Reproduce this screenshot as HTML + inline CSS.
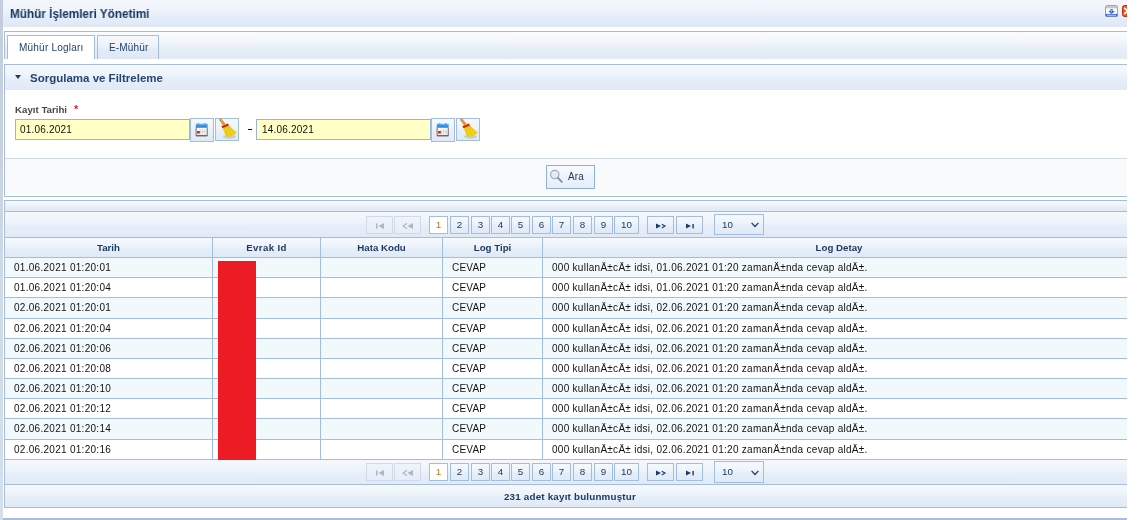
<!DOCTYPE html>
<html><head><meta charset="utf-8"><style>
*{box-sizing:border-box;margin:0;padding:0}
html,body{width:1137px;height:520px;overflow:hidden;background:#fff;font-family:"Liberation Sans",sans-serif}
.a{position:absolute}
.t{position:absolute;white-space:nowrap;line-height:1;will-change:transform}
#wrap{left:0;top:0;width:1127px;height:520px;overflow:hidden}
.g{background:linear-gradient(#f5f9fd,#eef4fb 40%,#e5edf8 60%,#e0eaf7)}
.pb{position:absolute;height:18px;border:1px solid #a2bde0;background:linear-gradient(#f5f9fd,#eef4fb 40%,#e5edf8 60%,#e0eaf7);}
.dis{border-color:#cfdbeb;background:linear-gradient(#f0f4fa,#e6edf7)}
.cur{background:#fff}
.hl{position:absolute;height:1px;background:#a2bde0}
.vl{position:absolute;width:1px;background:#a2bde0}
</style></head><body>
<div id="wrap" class="a">
<div class="a g" style="left:0;top:0;width:1127px;height:27px;background:linear-gradient(#f3f7fc,#eff4fb 40%,#e5edf8 60%,#dfe9f6)"></div>
<div class="t" style="left:10px;top:7.6px;font-weight:bold;font-size:12.3px;color:#1a3862;transform:scaleX(0.955);transform-origin:0 0">Mühür İşlemleri Yönetimi</div>
<svg class="a" style="left:1105px;top:5px" width="13" height="12" viewBox="0 0 13 12">
<rect x="0.5" y="0.5" width="12" height="11" rx="1.2" fill="#fbfbfb" stroke="#a4a4a4"/>
<rect x="1" y="1" width="11" height="2.3" fill="#c6c6c6"/>
<path d="M5.4 4h2.2v2h2.2l-3.3 2.9-3.3-2.9h2.2z" fill="#2f5fd4"/>
<path d="M6.5 4.6 V7.4" stroke="#c8d8fa" stroke-width="0.7"/>
<rect x="0.6" y="8.9" width="11.8" height="2.6" fill="#3c66da"/>
<rect x="2" y="9.8" width="9" height="0.8" fill="#e4ecff"/>
</svg>
<svg class="a" style="left:1122px;top:5px" width="5" height="12" viewBox="0 0 5 12">
<rect x="0.5" y="0.5" width="12" height="11" rx="2" fill="#e9561c" stroke="#cc2a10"/>
<path d="M2.2 2.8 L5.5 6 L2.2 9.2" stroke="#fff" stroke-width="1.7" fill="none"/>
</svg>
<div class="a" style="left:4px;top:31px;width:1130px;height:28px;border:1px solid #a2bde0;border-bottom:none;background:linear-gradient(#fafcfe,#f1f5fb 40%,#e6eef8 60%,#e1ebf7)"></div>
<div class="a" style="left:7px;top:35px;width:88px;height:24px;border:1px solid #a2bde0;border-bottom:none;background:#fff"></div>
<div class="t" style="left:18.5px;top:43px;font-size:10px;letter-spacing:0.22px;color:#22446e">Mühür Logları</div>
<div class="a" style="left:97px;top:35px;width:62px;height:24px;border:1px solid #a2bde0;border-bottom:none;background:linear-gradient(#f5f8fc,#eef3fa 40%,#e3ebf6 60%,#dfe8f4)"></div>
<div class="t" style="left:108.6px;top:43px;font-size:10px;letter-spacing:0.15px;color:#22446e">E-Mühür</div>
<div class="a" style="left:4px;top:64px;width:1130px;height:133px;border:1px solid #a2bde0;background:#fff"></div>
<div class="a" style="left:5px;top:65px;width:1125px;height:25px;background:linear-gradient(#f5f9fd,#eef4fb 40%,#e5edf8 60%,#e0eaf7)"></div>
<div class="a" style="left:15px;top:75px;width:0;height:0;border-left:3.5px solid transparent;border-right:3.5px solid transparent;border-top:4.5px solid #1d3b63"></div>
<div class="t" style="left:30px;top:73px;font-weight:bold;font-size:11.5px;color:#27466f">Sorgulama ve Filtreleme</div>
<div class="t" style="left:15px;top:105px;font-weight:bold;font-size:9.7px;color:#484848">Kayıt Tarihi</div>
<div class="t" style="left:74px;top:104px;font-weight:bold;font-size:11px;color:#f01a22">*</div>
<div class="a" style="left:15px;top:119px;width:175px;height:21px;border:1px solid #98b5de;background:#ffffc6"></div>
<div class="a" style="left:190px;top:118px;width:24px;height:24px;border:1px solid #a2bde0;background:linear-gradient(#f5f9fd,#eef4fb 40%,#e5edf8 60%,#e0eaf7)"></div>
<div class="a" style="left:215px;top:118px;width:24px;height:23px;border:1px solid #a2bde0;background:linear-gradient(#f5f9fd,#eef4fb 40%,#e5edf8 60%,#e0eaf7)"></div>
<svg class="a" style="left:195px;top:122px" width="13" height="15" viewBox="0 0 14 15" preserveAspectRatio="none">
<rect x="1.2" y="2.2" width="12" height="11.6" fill="#f7f9fa"/>
<path d="M1.2 5.5 V13.8 H13.2 V5.5" fill="none" stroke="#6a5650" stroke-width="0.9"/>
<rect x="1.2" y="13.2" width="12" height="1" fill="#6a5650"/>
<rect x="0.9" y="1.9" width="12.6" height="3.9" fill="#2a8eea"/>
<rect x="0.9" y="1.9" width="12.6" height="1.3" fill="#62b4f6"/>
<rect x="3" y="0.9" width="1.5" height="2.6" rx="0.6" fill="#8793a0"/>
<rect x="9.6" y="0.9" width="1.5" height="2.6" rx="0.6" fill="#8793a0"/>
<path d="M5.6 7v5.8M8.2 7v5.8M10.8 7v5.8M2 9.8h10.6" stroke="#c9cdd1" stroke-width="0.8"/>
<rect x="2.2" y="9" width="3" height="2.6" fill="#e4222a"/>
</svg>
<svg class="a" style="left:218px;top:118px" width="20" height="21" viewBox="0 0 20 21">
<ellipse cx="11.5" cy="18.6" rx="6.5" ry="1.9" fill="#a9b2be" opacity="0.55"/>
<path d="M2.6 1.8 L6.8 7.4" stroke="#d08a2a" stroke-width="2.6" stroke-linecap="round"/>
<path d="M2.8 1.6 L5.2 4.8" stroke="#e8b060" stroke-width="0.9" stroke-linecap="round"/>
<path d="M4.2 9.2 L10.4 6.8 C13 9.5 16.5 12.5 19 14.6 C16.5 17.5 12 19.2 8.2 19.3 C6.8 16 5.5 12.5 4.2 9.2 Z" fill="#f2d41e"/>
<path d="M6.5 10 L9.8 18.6 M8.6 9 L13.4 17.8 M10.4 8 L16.5 15.8" stroke="#cfae0e" stroke-width="0.55"/>
<path d="M3.4 7.9 L9.9 5.4 L11 7.6 L4.5 10.2 Z" fill="#d61e1e"/>
<path d="M3.3 7.8 L9.8 5.3" stroke="#f2d41e" stroke-width="0.7"/>
</svg>
<div class="a" style="left:256px;top:119px;width:175px;height:21px;border:1px solid #98b5de;background:#ffffc6"></div>
<div class="a" style="left:431px;top:118px;width:24px;height:24px;border:1px solid #a2bde0;background:linear-gradient(#f5f9fd,#eef4fb 40%,#e5edf8 60%,#e0eaf7)"></div>
<div class="a" style="left:456px;top:118px;width:24px;height:23px;border:1px solid #a2bde0;background:linear-gradient(#f5f9fd,#eef4fb 40%,#e5edf8 60%,#e0eaf7)"></div>
<svg class="a" style="left:436px;top:122px" width="13" height="15" viewBox="0 0 14 15" preserveAspectRatio="none">
<rect x="1.2" y="2.2" width="12" height="11.6" fill="#f7f9fa"/>
<path d="M1.2 5.5 V13.8 H13.2 V5.5" fill="none" stroke="#6a5650" stroke-width="0.9"/>
<rect x="1.2" y="13.2" width="12" height="1" fill="#6a5650"/>
<rect x="0.9" y="1.9" width="12.6" height="3.9" fill="#2a8eea"/>
<rect x="0.9" y="1.9" width="12.6" height="1.3" fill="#62b4f6"/>
<rect x="3" y="0.9" width="1.5" height="2.6" rx="0.6" fill="#8793a0"/>
<rect x="9.6" y="0.9" width="1.5" height="2.6" rx="0.6" fill="#8793a0"/>
<path d="M5.6 7v5.8M8.2 7v5.8M10.8 7v5.8M2 9.8h10.6" stroke="#c9cdd1" stroke-width="0.8"/>
<rect x="2.2" y="9" width="3" height="2.6" fill="#e4222a"/>
</svg>
<svg class="a" style="left:459px;top:118px" width="20" height="21" viewBox="0 0 20 21">
<ellipse cx="11.5" cy="18.6" rx="6.5" ry="1.9" fill="#a9b2be" opacity="0.55"/>
<path d="M2.6 1.8 L6.8 7.4" stroke="#d08a2a" stroke-width="2.6" stroke-linecap="round"/>
<path d="M2.8 1.6 L5.2 4.8" stroke="#e8b060" stroke-width="0.9" stroke-linecap="round"/>
<path d="M4.2 9.2 L10.4 6.8 C13 9.5 16.5 12.5 19 14.6 C16.5 17.5 12 19.2 8.2 19.3 C6.8 16 5.5 12.5 4.2 9.2 Z" fill="#f2d41e"/>
<path d="M6.5 10 L9.8 18.6 M8.6 9 L13.4 17.8 M10.4 8 L16.5 15.8" stroke="#cfae0e" stroke-width="0.55"/>
<path d="M3.4 7.9 L9.9 5.4 L11 7.6 L4.5 10.2 Z" fill="#d61e1e"/>
<path d="M3.3 7.8 L9.8 5.3" stroke="#f2d41e" stroke-width="0.7"/>
</svg>
<div class="t" style="left:20px;top:125.4px;font-size:10px;letter-spacing:0.2px;color:#111">01.06.2021</div>
<div class="t" style="left:262px;top:125.4px;font-size:10px;letter-spacing:0.2px;color:#111">14.06.2021</div>
<div class="a" style="left:248px;top:129px;width:4px;height:1px;background:#111"></div>
<div class="a" style="left:5px;top:158px;width:1125px;height:1px;background:#cfdbe7"></div>
<div class="a" style="left:5px;top:159px;width:1125px;height:36px;background:#f8fafc"></div>
<div class="a" style="left:546px;top:165px;width:49px;height:24px;border:1px solid #90b0dc;background:linear-gradient(#f8fafd,#e5edf8)"></div>
<svg class="a" style="left:549px;top:169px" width="15" height="15" viewBox="0 0 15 15">
<circle cx="5.8" cy="5.6" r="4.2" fill="#dcecf9" stroke="#a2a7ac" stroke-width="1.1"/>
<path d="M3.3 4.6 C4 3.3 6 2.8 7.6 3.6" stroke="#f4f9fe" stroke-width="0.9" fill="none"/>
<path d="M8.9 8.8 L12.8 12.9" stroke="#8c9096" stroke-width="1.9" stroke-linecap="round"/>
</svg>
<div class="t" style="left:568px;top:172px;font-size:10px;letter-spacing:0.1px;color:#1d3b63">Ara</div>
<div class="a" style="left:4px;top:200px;width:1130px;height:308px;border:1px solid #a2bde0;background:#fff"></div>
<div class="a g" style="left:5px;top:201px;width:1125px;height:10px"></div>
<div class="hl" style="left:5px;top:211px;width:1125px"></div>
<div class="a" style="left:5px;top:212px;width:1125px;height:25px;background:linear-gradient(#f5f9fd,#eef4fb 40%,#e5edf8 60%,#e0eaf7)"></div>
<div class="pb dis" style="left:366px;top:216px;width:27px"></div>
<div class="pb dis" style="left:394px;top:216px;width:27px"></div>
<svg class="a" style="left:375px;top:223px" width="10" height="6" viewBox="0 0 10 6"><rect x="1" y="0.5" width="1.5" height="5" fill="#a9b6c6"/><path d="M9 0 V6 L3.5 3 Z" fill="#a9b6c6"/></svg>
<svg class="a" style="left:402px;top:223px" width="12" height="6" viewBox="0 0 12 6"><path d="M5 0.3 L1.2 3 L5 5.7" stroke="#a9b6c6" stroke-width="1.2" fill="none"/><path d="M11 0 V6 L5.5 3 Z" fill="#a9b6c6"/></svg>
<div class="pb cur" style="left:429px;top:216px;width:19px"></div>
<div class="t" style="left:429px;top:220.3px;width:19px;text-align:center;font-size:9.8px;color:#e07010">1</div>
<div class="pb" style="left:450px;top:216px;width:19px"></div>
<div class="t" style="left:450px;top:220.3px;width:19px;text-align:center;font-size:9.8px;color:#1d3b63">2</div>
<div class="pb" style="left:471px;top:216px;width:19px"></div>
<div class="t" style="left:471px;top:220.3px;width:19px;text-align:center;font-size:9.8px;color:#1d3b63">3</div>
<div class="pb" style="left:491px;top:216px;width:19px"></div>
<div class="t" style="left:491px;top:220.3px;width:19px;text-align:center;font-size:9.8px;color:#1d3b63">4</div>
<div class="pb" style="left:511px;top:216px;width:19px"></div>
<div class="t" style="left:511px;top:220.3px;width:19px;text-align:center;font-size:9.8px;color:#1d3b63">5</div>
<div class="pb" style="left:532px;top:216px;width:19px"></div>
<div class="t" style="left:532px;top:220.3px;width:19px;text-align:center;font-size:9.8px;color:#1d3b63">6</div>
<div class="pb" style="left:552px;top:216px;width:19px"></div>
<div class="t" style="left:552px;top:220.3px;width:19px;text-align:center;font-size:9.8px;color:#1d3b63">7</div>
<div class="pb" style="left:573px;top:216px;width:19px"></div>
<div class="t" style="left:573px;top:220.3px;width:19px;text-align:center;font-size:9.8px;color:#1d3b63">8</div>
<div class="pb" style="left:594px;top:216px;width:19px"></div>
<div class="t" style="left:594px;top:220.3px;width:19px;text-align:center;font-size:9.8px;color:#1d3b63">9</div>
<div class="pb" style="left:614px;top:216px;width:25px"></div>
<div class="t" style="left:614px;top:220.3px;width:25px;text-align:center;font-size:9.8px;color:#1d3b63">10</div>
<div class="pb" style="left:647px;top:216px;width:27px"></div>
<div class="pb" style="left:676px;top:216px;width:27px"></div>
<svg class="a" style="left:655px;top:223px" width="12" height="6" viewBox="0 0 12 6"><path d="M1 0.6 V5.6 L6 3.1 Z" fill="#1d3b63"/><path d="M6.8 1.3 L10 3.1 L6.8 4.9" stroke="#1d3b63" stroke-width="1.1" fill="none"/></svg>
<svg class="a" style="left:685px;top:223px" width="10" height="6" viewBox="0 0 10 6"><path d="M1 0.6 V5.6 L6 3.1 Z" fill="#1d3b63"/><rect x="7.4" y="1" width="1.4" height="4.4" fill="#1d3b63"/></svg>
<div class="a" style="left:714px;top:214px;width:50px;height:21px;border:1px solid #a2bde0;background:linear-gradient(#f5f9fd,#eef4fb 40%,#e5edf8 60%,#e0eaf7)"></div>
<div class="t" style="left:722px;top:219.6px;font-size:9.8px;color:#1d3b63">10</div>
<svg class="a" style="left:751px;top:222.0px" width="9" height="6" viewBox="0 0 9 6"><path d="M0.6 0.8 L4 4.5 L7.4 0.8" stroke="#1d3b63" stroke-width="1.2" fill="none"/></svg>
<div class="hl" style="left:5px;top:237px;width:1125px"></div>
<div class="a" style="left:5px;top:238px;width:1125px;height:19px;background:linear-gradient(#f5f9fd,#eef4fb 40%,#e5edf8 60%,#e0eaf7)"></div>
<div class="hl" style="left:5px;top:257px;width:1125px"></div>
<div class="t" style="left:5px;top:243px;width:207px;text-align:center;font-weight:bold;font-size:9.7px;letter-spacing:0;color:#1d3b63">Tarih</div>
<div class="vl" style="left:212px;top:238px;height:222px"></div>
<div class="t" style="left:213px;top:243px;width:107px;text-align:center;font-weight:bold;font-size:9.7px;letter-spacing:0.35px;color:#1d3b63">Evrak Id</div>
<div class="vl" style="left:320px;top:238px;height:222px"></div>
<div class="t" style="left:321px;top:243px;width:121px;text-align:center;font-weight:bold;font-size:9.7px;letter-spacing:0;color:#1d3b63">Hata Kodu</div>
<div class="vl" style="left:442px;top:238px;height:222px"></div>
<div class="t" style="left:443px;top:243px;width:99px;text-align:center;font-weight:bold;font-size:9.7px;letter-spacing:0;color:#1d3b63">Log Tipi</div>
<div class="vl" style="left:542px;top:238px;height:222px"></div>
<div class="t" style="left:543px;top:243px;width:592px;text-align:center;font-weight:bold;font-size:9.7px;letter-spacing:0;color:#1d3b63">Log Detay</div>
<div class="a" style="left:5px;top:258px;width:1125px;height:19px;background:#f2f9fd"></div>
<div class="hl" style="left:5px;top:277px;width:1125px"></div>
<div class="t" style="left:14px;top:263px;font-size:10px;letter-spacing:0.28px;color:#111">01.06.2021 01:20:01</div>
<div class="t" style="left:452px;top:263px;font-size:10px;letter-spacing:0.2px;color:#111">CEVAP</div>
<div class="t" style="left:552px;top:263px;font-size:10px;letter-spacing:0.28px;color:#111">000 kullanÄ±cÄ± idsi, 01.06.2021 01:20 zamanÄ±nda cevap aldÄ±.</div>
<div class="hl" style="left:5px;top:297px;width:1125px"></div>
<div class="t" style="left:14px;top:283px;font-size:10px;letter-spacing:0.28px;color:#111">01.06.2021 01:20:04</div>
<div class="t" style="left:452px;top:283px;font-size:10px;letter-spacing:0.2px;color:#111">CEVAP</div>
<div class="t" style="left:552px;top:283px;font-size:10px;letter-spacing:0.28px;color:#111">000 kullanÄ±cÄ± idsi, 01.06.2021 01:20 zamanÄ±nda cevap aldÄ±.</div>
<div class="a" style="left:5px;top:298px;width:1125px;height:20px;background:#f2f9fd"></div>
<div class="hl" style="left:5px;top:318px;width:1125px"></div>
<div class="t" style="left:14px;top:303px;font-size:10px;letter-spacing:0.28px;color:#111">02.06.2021 01:20:01</div>
<div class="t" style="left:452px;top:303px;font-size:10px;letter-spacing:0.2px;color:#111">CEVAP</div>
<div class="t" style="left:552px;top:303px;font-size:10px;letter-spacing:0.28px;color:#111">000 kullanÄ±cÄ± idsi, 02.06.2021 01:20 zamanÄ±nda cevap aldÄ±.</div>
<div class="hl" style="left:5px;top:338px;width:1125px"></div>
<div class="t" style="left:14px;top:324px;font-size:10px;letter-spacing:0.28px;color:#111">02.06.2021 01:20:04</div>
<div class="t" style="left:452px;top:324px;font-size:10px;letter-spacing:0.2px;color:#111">CEVAP</div>
<div class="t" style="left:552px;top:324px;font-size:10px;letter-spacing:0.28px;color:#111">000 kullanÄ±cÄ± idsi, 02.06.2021 01:20 zamanÄ±nda cevap aldÄ±.</div>
<div class="a" style="left:5px;top:339px;width:1125px;height:19px;background:#f2f9fd"></div>
<div class="hl" style="left:5px;top:358px;width:1125px"></div>
<div class="t" style="left:14px;top:344px;font-size:10px;letter-spacing:0.28px;color:#111">02.06.2021 01:20:06</div>
<div class="t" style="left:452px;top:344px;font-size:10px;letter-spacing:0.2px;color:#111">CEVAP</div>
<div class="t" style="left:552px;top:344px;font-size:10px;letter-spacing:0.28px;color:#111">000 kullanÄ±cÄ± idsi, 02.06.2021 01:20 zamanÄ±nda cevap aldÄ±.</div>
<div class="hl" style="left:5px;top:378px;width:1125px"></div>
<div class="t" style="left:14px;top:364px;font-size:10px;letter-spacing:0.28px;color:#111">02.06.2021 01:20:08</div>
<div class="t" style="left:452px;top:364px;font-size:10px;letter-spacing:0.2px;color:#111">CEVAP</div>
<div class="t" style="left:552px;top:364px;font-size:10px;letter-spacing:0.28px;color:#111">000 kullanÄ±cÄ± idsi, 02.06.2021 01:20 zamanÄ±nda cevap aldÄ±.</div>
<div class="a" style="left:5px;top:379px;width:1125px;height:19px;background:#f2f9fd"></div>
<div class="hl" style="left:5px;top:398px;width:1125px"></div>
<div class="t" style="left:14px;top:384px;font-size:10px;letter-spacing:0.28px;color:#111">02.06.2021 01:20:10</div>
<div class="t" style="left:452px;top:384px;font-size:10px;letter-spacing:0.2px;color:#111">CEVAP</div>
<div class="t" style="left:552px;top:384px;font-size:10px;letter-spacing:0.28px;color:#111">000 kullanÄ±cÄ± idsi, 02.06.2021 01:20 zamanÄ±nda cevap aldÄ±.</div>
<div class="hl" style="left:5px;top:418px;width:1125px"></div>
<div class="t" style="left:14px;top:404px;font-size:10px;letter-spacing:0.28px;color:#111">02.06.2021 01:20:12</div>
<div class="t" style="left:452px;top:404px;font-size:10px;letter-spacing:0.2px;color:#111">CEVAP</div>
<div class="t" style="left:552px;top:404px;font-size:10px;letter-spacing:0.28px;color:#111">000 kullanÄ±cÄ± idsi, 02.06.2021 01:20 zamanÄ±nda cevap aldÄ±.</div>
<div class="a" style="left:5px;top:419px;width:1125px;height:20px;background:#f2f9fd"></div>
<div class="hl" style="left:5px;top:439px;width:1125px"></div>
<div class="t" style="left:14px;top:424px;font-size:10px;letter-spacing:0.28px;color:#111">02.06.2021 01:20:14</div>
<div class="t" style="left:452px;top:424px;font-size:10px;letter-spacing:0.2px;color:#111">CEVAP</div>
<div class="t" style="left:552px;top:424px;font-size:10px;letter-spacing:0.28px;color:#111">000 kullanÄ±cÄ± idsi, 02.06.2021 01:20 zamanÄ±nda cevap aldÄ±.</div>
<div class="hl" style="left:5px;top:459px;width:1125px"></div>
<div class="t" style="left:14px;top:445px;font-size:10px;letter-spacing:0.28px;color:#111">02.06.2021 01:20:16</div>
<div class="t" style="left:452px;top:445px;font-size:10px;letter-spacing:0.2px;color:#111">CEVAP</div>
<div class="t" style="left:552px;top:445px;font-size:10px;letter-spacing:0.28px;color:#111">000 kullanÄ±cÄ± idsi, 02.06.2021 01:20 zamanÄ±nda cevap aldÄ±.</div>
<div class="vl" style="left:212px;top:238px;height:222px"></div>
<div class="vl" style="left:320px;top:238px;height:222px"></div>
<div class="vl" style="left:442px;top:238px;height:222px"></div>
<div class="vl" style="left:542px;top:238px;height:222px"></div>
<div class="a" style="left:218px;top:261px;width:38px;height:199px;background:#ed1c24"></div>
<div class="a" style="left:5px;top:460px;width:1125px;height:25px;background:linear-gradient(#f5f9fd,#eef4fb 40%,#e5edf8 60%,#e0eaf7)"></div>
<div class="pb dis" style="left:366px;top:463px;width:27px"></div>
<div class="pb dis" style="left:394px;top:463px;width:27px"></div>
<svg class="a" style="left:375px;top:470px" width="10" height="6" viewBox="0 0 10 6"><rect x="1" y="0.5" width="1.5" height="5" fill="#a9b6c6"/><path d="M9 0 V6 L3.5 3 Z" fill="#a9b6c6"/></svg>
<svg class="a" style="left:402px;top:470px" width="12" height="6" viewBox="0 0 12 6"><path d="M5 0.3 L1.2 3 L5 5.7" stroke="#a9b6c6" stroke-width="1.2" fill="none"/><path d="M11 0 V6 L5.5 3 Z" fill="#a9b6c6"/></svg>
<div class="pb cur" style="left:429px;top:463px;width:19px"></div>
<div class="t" style="left:429px;top:467.3px;width:19px;text-align:center;font-size:9.8px;color:#e07010">1</div>
<div class="pb" style="left:450px;top:463px;width:19px"></div>
<div class="t" style="left:450px;top:467.3px;width:19px;text-align:center;font-size:9.8px;color:#1d3b63">2</div>
<div class="pb" style="left:471px;top:463px;width:19px"></div>
<div class="t" style="left:471px;top:467.3px;width:19px;text-align:center;font-size:9.8px;color:#1d3b63">3</div>
<div class="pb" style="left:491px;top:463px;width:19px"></div>
<div class="t" style="left:491px;top:467.3px;width:19px;text-align:center;font-size:9.8px;color:#1d3b63">4</div>
<div class="pb" style="left:511px;top:463px;width:19px"></div>
<div class="t" style="left:511px;top:467.3px;width:19px;text-align:center;font-size:9.8px;color:#1d3b63">5</div>
<div class="pb" style="left:532px;top:463px;width:19px"></div>
<div class="t" style="left:532px;top:467.3px;width:19px;text-align:center;font-size:9.8px;color:#1d3b63">6</div>
<div class="pb" style="left:552px;top:463px;width:19px"></div>
<div class="t" style="left:552px;top:467.3px;width:19px;text-align:center;font-size:9.8px;color:#1d3b63">7</div>
<div class="pb" style="left:573px;top:463px;width:19px"></div>
<div class="t" style="left:573px;top:467.3px;width:19px;text-align:center;font-size:9.8px;color:#1d3b63">8</div>
<div class="pb" style="left:594px;top:463px;width:19px"></div>
<div class="t" style="left:594px;top:467.3px;width:19px;text-align:center;font-size:9.8px;color:#1d3b63">9</div>
<div class="pb" style="left:614px;top:463px;width:25px"></div>
<div class="t" style="left:614px;top:467.3px;width:25px;text-align:center;font-size:9.8px;color:#1d3b63">10</div>
<div class="pb" style="left:647px;top:463px;width:27px"></div>
<div class="pb" style="left:676px;top:463px;width:27px"></div>
<svg class="a" style="left:655px;top:470px" width="12" height="6" viewBox="0 0 12 6"><path d="M1 0.6 V5.6 L6 3.1 Z" fill="#1d3b63"/><path d="M6.8 1.3 L10 3.1 L6.8 4.9" stroke="#1d3b63" stroke-width="1.1" fill="none"/></svg>
<svg class="a" style="left:685px;top:470px" width="10" height="6" viewBox="0 0 10 6"><path d="M1 0.6 V5.6 L6 3.1 Z" fill="#1d3b63"/><rect x="7.4" y="1" width="1.4" height="4.4" fill="#1d3b63"/></svg>
<div class="a" style="left:714px;top:461px;width:50px;height:22px;border:1px solid #a2bde0;background:linear-gradient(#f5f9fd,#eef4fb 40%,#e5edf8 60%,#e0eaf7)"></div>
<div class="t" style="left:722px;top:467.4px;font-size:9.8px;color:#1d3b63">10</div>
<svg class="a" style="left:751px;top:469.79999999999995px" width="9" height="6" viewBox="0 0 9 6"><path d="M0.6 0.8 L4 4.5 L7.4 0.8" stroke="#1d3b63" stroke-width="1.2" fill="none"/></svg>
<div class="hl" style="left:5px;top:484px;width:1125px"></div>
<div class="a" style="left:5px;top:485px;width:1125px;height:22px;background:linear-gradient(#f5f9fd,#eef4fb 40%,#e5edf8 60%,#e0eaf7)"></div>
<div class="t" style="left:5px;top:492.3px;width:1130px;text-align:center;font-weight:bold;font-size:9.8px;letter-spacing:0.2px;color:#1d3b63">231 adet kayıt bulunmuştur</div>
<div class="a" style="left:3px;top:518px;width:1130px;height:1px;background:#a6bde0"></div>
<div class="a" style="left:3px;top:519px;width:1130px;height:1px;background:#b8bcc2"></div>
</div>
<div class="a" style="left:0;top:0;width:3px;height:520px;background:linear-gradient(#c4ccde,#c8d0e0 25%,#d0d8e6 50%,#d6dfec)"></div>
</body></html>
